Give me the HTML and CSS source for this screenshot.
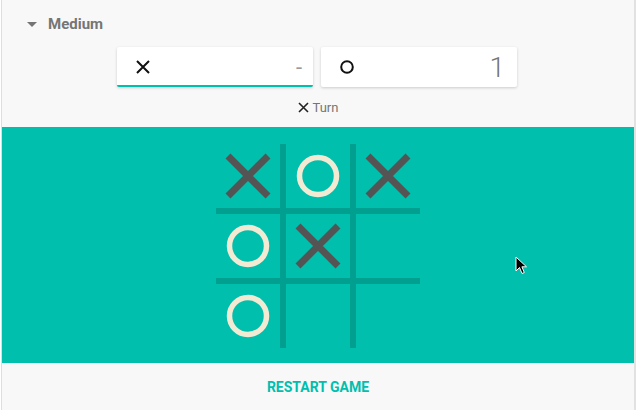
FILE: index.html
```html
<!DOCTYPE html>
<html>
<head>
<meta charset="utf-8">
<link rel="stylesheet" href="styles.css">
</head>
<body>
<div class="app">
  <header class="top">
    <div class="difficulty">
      <svg class="caret" width="10" height="5" viewBox="0 0 10 5"><path d="M0 0h10L5 5z" fill="#757575"/></svg>
      <span>Medium</span>
    </div>
    <div class="scores">
      <div class="card active">
        <svg class="mark" width="16" height="16" viewBox="0 0 16 16"><path d="M2 2L14 14M14 2L2 14" stroke="#111" stroke-width="2"/></svg>
        <span class="score dash">-</span>
      </div>
      <div class="card">
        <svg class="mark" width="16" height="16" viewBox="0 0 16 16"><circle cx="8" cy="8" r="5.8" fill="none" stroke="#111" stroke-width="2"/></svg>
        <span class="score">1</span>
      </div>
    </div>
    <div class="turn">
      <svg width="11" height="11" viewBox="0 0 11 11"><path d="M1 1L10 10M10 1L1 10" stroke="#222" stroke-width="1.6"/></svg>
      <span>Turn</span>
    </div>
  </header>
  <main class="board-area">
    <div class="board">
      <div class="cell"><svg viewBox="0 0 64 64"><path d="M12 12L52 52M52 12L12 52" class="x"/></svg></div>
      <div class="cell"><svg viewBox="0 0 64 64"><circle cx="32" cy="32" r="18.5" class="o"/></svg></div>
      <div class="cell"><svg viewBox="0 0 64 64"><path d="M12 12L52 52M52 12L12 52" class="x"/></svg></div>
      <div class="cell"><svg viewBox="0 0 64 64"><circle cx="32" cy="32" r="18.5" class="o"/></svg></div>
      <div class="cell"><svg viewBox="0 0 64 64"><path d="M12 12L52 52M52 12L12 52" class="x"/></svg></div>
      <div class="cell"></div>
      <div class="cell"><svg viewBox="0 0 64 64"><circle cx="32" cy="32" r="18.5" class="o"/></svg></div>
      <div class="cell"></div>
      <div class="cell"></div>
    </div>
    <svg class="cursor" width="14" height="20" viewBox="0 0 14 20"><path d="M1 1L1 15L4.5 11.5L7 17.5L9.3 16.5L6.9 10.8L11.5 10.8Z" fill="#000" stroke="#fff" stroke-width="1"/></svg>
  </main>
  <footer class="bottom">
    <button class="restart">RESTART GAME</button>
  </footer>
</div>
</body>
</html>
```
FILE: styles.css
```css
* { box-sizing: border-box; }
html, body { margin: 0; padding: 0; background: #fff; }
body { font-family: Roboto, "Noto Sans", sans-serif; }
.app {
  width: 635px;
  height: 410px;
  margin-left: 1px;
  border-left: 1px solid #dedede;
  border-right: 2px solid #e2e2e2;
  background: #f8f8f8;
  display: flex;
  flex-direction: column;
}
.top {
  height: 126px;
  display: flex;
  flex-direction: column;
}
.difficulty {
  display: flex;
  align-items: center;
  height: 47px;
  padding-left: 25px;
  padding-top: 1px;
  color: #757575;
  font-weight: 700;
  font-size: 15px;
}
.caret { margin-right: 11px; }
.scores {
  display: flex;
  justify-content: center;
  gap: 8px;
  margin-left: -2px;
}
.card {
  width: 196px;
  height: 40px;
  background: #fff;
  border-radius: 2px;
  box-shadow: 0 1px 3px rgba(0,0,0,0.18);
  display: flex;
  align-items: center;
  justify-content: space-between;
  padding: 0 12px 0 18px;
}
.card.active { border-bottom: 2px solid #00bfad; padding-top: 2px; padding-right: 11px; }
.mark { display: block; }
.score {
  color: #757575;
  font-size: 28px;
  font-weight: 300;
}
.score.dash { font-size: 22px; font-weight: 400; color: #9a9a9a; }
.turn {
  display: flex;
  align-items: center;
  justify-content: center;
  gap: 4px;
  margin-top: 13px;
  font-size: 13px;
  color: #757575;
}
.turn svg { display: block; }
.board-area {
  position: relative;
  height: 236px;
  background: #00bfad;
  display: flex;
  justify-content: center;
  align-items: center;
  margin-top: 1px;
}
.board {
  display: grid;
  grid-template-columns: repeat(3, 64px);
  grid-template-rows: repeat(3, 64px);
  gap: 6px;
  background: #009f90;
  margin-top: 1px;
}
.cell { background: #00bfad; }
.cell svg { display: block; width: 64px; height: 64px; }
.x { stroke: #545454; stroke-width: 7; fill: none; }
.o { fill: none; stroke: #f3ead3; stroke-width: 5.5; }
.cursor { position: absolute; left: 513px; top: 129px; }
.bottom {
  flex: 1;
  display: flex;
  align-items: center;
  justify-content: center;
}
.restart {
  background: none;
  border: 0;
  font-family: Roboto, sans-serif;
  font-weight: 700;
  font-size: 14px;
  color: #00bfad;
  padding: 0;
}
```
